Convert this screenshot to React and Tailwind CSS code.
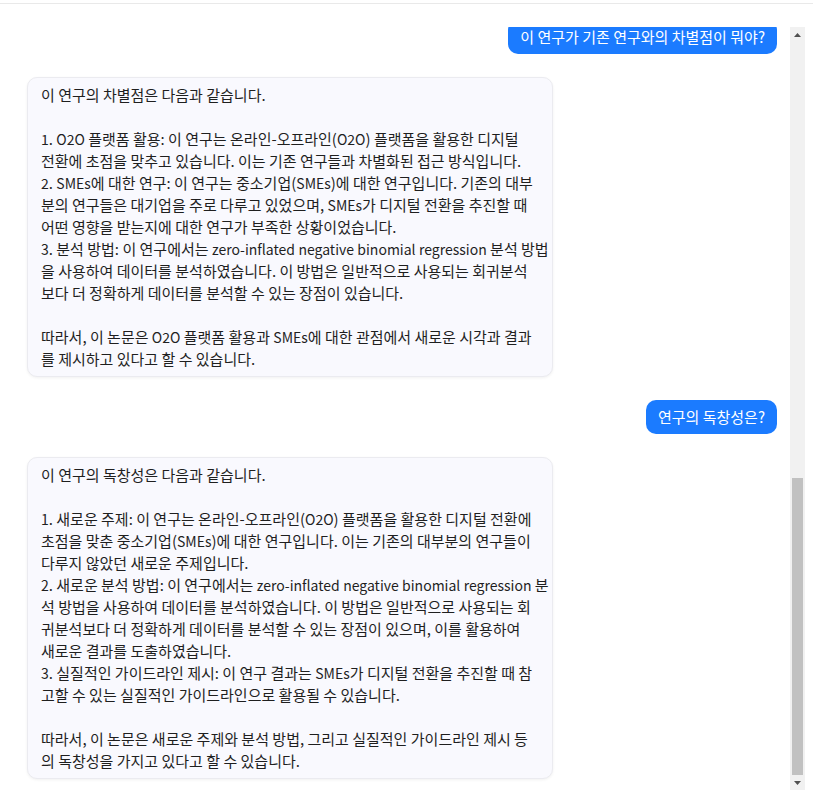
import React from "react";

const font = { fontFamily: '"Noto Sans CJK KR", "Noto Sans", sans-serif' };

const answer1 = [
  "이 연구의 차별점은 다음과 같습니다.",
  "",
  "1. O2O 플랫폼 활용: 이 연구는 온라인-오프라인(O2O) 플랫폼을 활용한 디지털",
  "전환에 초점을 맞추고 있습니다. 이는 기존 연구들과 차별화된 접근 방식입니다.",
  "2. SMEs에 대한 연구: 이 연구는 중소기업(SMEs)에 대한 연구입니다. 기존의 대부",
  "분의 연구들은 대기업을 주로 다루고 있었으며, SMEs가 디지털 전환을 추진할 때",
  "어떤 영향을 받는지에 대한 연구가 부족한 상황이었습니다.",
  "3. 분석 방법: 이 연구에서는 zero-inflated negative binomial regression 분석 방법",
  "을 사용하여 데이터를 분석하였습니다. 이 방법은 일반적으로 사용되는 회귀분석",
  "보다 더 정확하게 데이터를 분석할 수 있는 장점이 있습니다.",
  "",
  "따라서, 이 논문은 O2O 플랫폼 활용과 SMEs에 대한 관점에서 새로운 시각과 결과",
  "를 제시하고 있다고 할 수 있습니다.",
];

const answer2 = [
  "이 연구의 독창성은 다음과 같습니다.",
  "",
  "1. 새로운 주제: 이 연구는 온라인-오프라인(O2O) 플랫폼을 활용한 디지털 전환에",
  "초점을 맞춘 중소기업(SMEs)에 대한 연구입니다. 이는 기존의 대부분의 연구들이",
  "다루지 않았던 새로운 주제입니다.",
  "2. 새로운 분석 방법: 이 연구에서는 zero-inflated negative binomial regression 분",
  "석 방법을 사용하여 데이터를 분석하였습니다. 이 방법은 일반적으로 사용되는 회",
  "귀분석보다 더 정확하게 데이터를 분석할 수 있는 장점이 있으며, 이를 활용하여",
  "새로운 결과를 도출하였습니다.",
  "3. 실질적인 가이드라인 제시: 이 연구 결과는 SMEs가 디지털 전환을 추진할 때 참",
  "고할 수 있는 실질적인 가이드라인으로 활용될 수 있습니다.",
  "",
  "따라서, 이 논문은 새로운 주제와 분석 방법, 그리고 실질적인 가이드라인 제시 등",
  "의 독창성을 가지고 있다고 할 수 있습니다.",
];

// Latin runs are set a touch smaller than Hangul, as in the reference font
function Mixed({ text }) {
  const parts = text.split(/([A-Za-z0-9][A-Za-z0-9\-]*)/);
  return (
    <>
      {parts.map((p, i) =>
        i % 2 === 1 ? (
          <span key={i} className="text-[14px]">
            {p}
          </span>
        ) : (
          <React.Fragment key={i}>{p}</React.Fragment>
        )
      )}
    </>
  );
}

function UserBubble({ children }) {
  return (
    <div className="self-end rounded-[10px] bg-[#1b7bff] px-[12px] py-[6px] text-[15px] leading-[22px] text-white whitespace-nowrap">
      {children}
    </div>
  );
}

function BotBubble({ lines }) {
  return (
    <div className="self-start shrink-0 w-[526px] rounded-[10px] border border-[#ebebf0] bg-[#f9f9fe] px-[13px] py-[6px] text-[15px] leading-[22px] text-[#1f1f1f] shadow-[0_1px_3px_rgba(0,0,0,0.06)]">
      {lines.map((l, i) => (
        <div key={i} className="whitespace-nowrap h-[22px]">
          {l ? <Mixed text={l} /> : "\u00a0"}
        </div>
      ))}
    </div>
  );
}

function Scrollbar() {
  return (
    <div className="w-[15px] shrink-0 h-full flex flex-col bg-[#f1f1f1]">
      <div className="h-[15px] flex items-center justify-center">
        <svg width="7" height="4" viewBox="0 0 7 4">
          <polygon points="3.5,0 7,4 0,4" fill="#505050" />
        </svg>
      </div>
      <div className="flex-1" />
      <div className="h-[297px] mx-[2px] bg-[#c1c1c1]" />
      <div className="h-[15px] flex items-center justify-center">
        <svg width="7" height="4" viewBox="0 0 7 4">
          <polygon points="0,0 7,0 3.5,4" fill="#505050" />
        </svg>
      </div>
    </div>
  );
}

export default function App() {
  return (
    <div className="h-[796px] w-[813px] bg-white overflow-hidden" style={font}>
      <div className="h-[3px]" />
      <div className="border-t border-[#e9e9e9]" />
      <div className="pt-[23px] pr-[8px]">
        <div className="h-[763px] flex">
          <div className="flex-1 min-w-0 overflow-hidden flex flex-col justify-end gap-[23px] pl-[27px] pr-[13px] pb-[11px]">
            <UserBubble>이 연구가 기존 연구와의 차별점이 뭐야?</UserBubble>
            <BotBubble lines={answer1} />
            <UserBubble>연구의 독창성은?</UserBubble>
            <BotBubble lines={answer2} />
          </div>
          <Scrollbar />
        </div>
      </div>
    </div>
  );
}
